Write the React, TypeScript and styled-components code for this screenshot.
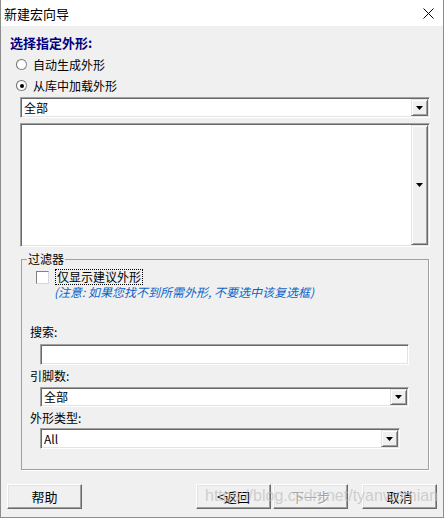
import styled, { createGlobalStyle } from 'styled-components';

const GlobalStyle = createGlobalStyle`
  body {
    margin: 0;
    font-family: "Noto Sans CJK SC", "Liberation Sans", sans-serif;
    font-size: 12px;
    color: #000;
  }
`;

const Window = styled.div`
  position: relative;
  width: 444px;
  height: 518px;
  box-sizing: border-box;
  background: #f0f0f0;
  border: 1px solid #8c8c8c;
  border-top: none;
  display: flex;
  flex-direction: column;
  overflow: hidden;
`;

const TitleBar = styled.div`
  height: 26px;
  background: #fff;
  display: flex;
  align-items: center;
  justify-content: space-between;
  padding: 0 9px 0 3px;
  font-size: 13px;

  svg {
    display: block;
  }
`;

const Content = styled.div`
  display: flex;
  flex-direction: column;
  align-items: flex-start;
  padding-left: 9px;
`;

const Heading = styled.div`
  margin-top: 9px;
  font-size: 13px;
  line-height: 16px;
  font-weight: bold;
  color: #000080;
`;

const RadioRow = styled.label`
  display: flex;
  align-items: center;
  height: 21px;
  margin-left: 6px;
  gap: 6px;
  line-height: 16px;

  &:first-of-type {
    margin-top: 3px;
  }
`;

const RadioDot = styled.span<{ $checked?: boolean }>`
  width: 11px;
  height: 11px;
  box-sizing: border-box;
  border-radius: 50%;
  border: 1px solid #8a8a8a;
  border-top-color: #6f6f6f;
  border-left-color: #6f6f6f;
  background: #fff;
  display: flex;
  align-items: center;
  justify-content: center;

  &::after {
    content: '';
    width: 4px;
    height: 4px;
    border-radius: 50%;
    background: ${p => (p.$checked ? '#000' : 'transparent')};
  }
`;

const Sunken = styled.div<{ $w: number; $h: number; $top?: number; $left?: number }>`
  width: ${p => p.$w}px;
  height: ${p => p.$h}px;
  margin-top: ${p => p.$top ?? 0}px;
  margin-left: ${p => p.$left ?? 0}px;
  box-sizing: border-box;
  background: #fff;
  border: 1px solid;
  border-color: #a0a0a0 #fff #fff #a0a0a0;
  box-shadow: inset 1px 1px 0 #696969, inset -1px -1px 0 #e3e3e3;
  display: flex;
  align-items: stretch;
  padding: 1px;
`;

const Value = styled.div`
  flex: 1;
  display: flex;
  align-items: center;
  padding-left: 2px;
  font-size: 12px;
  line-height: 14px;
`;

const RaisedButton = styled.div`
  width: 17px;
  box-sizing: border-box;
  background: #f0f0f0;
  border: 1px solid;
  border-color: #e3e3e3 #696969 #696969 #e3e3e3;
  box-shadow: inset 1px 1px 0 #fff, inset -1px -1px 0 #a0a0a0;
  display: flex;
  align-items: center;
  justify-content: center;
`;

const Group = styled.fieldset`
  margin: 4px 0 0 11px;
  width: 408px;
  box-sizing: border-box;
  padding: 0 0 20px 0;
  border: 1px solid #a0a0a0;
  box-shadow: 1px 1px 0 #fff;
  display: flex;
  flex-direction: column;
  align-items: flex-start;

  legend {
    margin-left: 5px;
    padding: 0 1px;
    line-height: 16px;
  }
`;

const CheckRow = styled.div`
  display: flex;
  align-items: center;
  gap: 6px;
  margin: 2px 0 0 14px;
  height: 16px;
`;

const CheckBox = styled.span`
  width: 13px;
  height: 13px;
  box-sizing: border-box;
  background: #fff;
  border: 1px solid;
  border-color: #808080 #d8d8d8 #d8d8d8 #808080;
`;

const FocusLabel = styled.span`
  border: 1px dotted #000;
  padding: 0 1px;
  line-height: 14px;
`;

const Note = styled.div`
  margin-left: 32px;
  font-size: 12px;
  line-height: 14px;
  font-style: italic;
  color: #0a64c8;
`;

const FieldLabel = styled.div<{ $top: number }>`
  margin: ${p => p.$top}px 0 0 8px;
  line-height: 16px;
`;

const Footer = styled.div`
  display: flex;
  align-items: center;
  margin-top: 14px;
  padding: 0 6px;
  gap: 2px;
`;

const Spacer = styled.div`
  flex: 1;
`;

const DialogButton = styled.button<{ $gapLeft?: number }>`
  width: 75px;
  height: 25px;
  margin-left: ${p => p.$gapLeft ?? 0}px;
  box-sizing: border-box;
  background: #f0f0f0;
  border: 1px solid;
  border-color: #fff #696969 #696969 #fff;
  box-shadow: inset -1px -1px 0 #a0a0a0, inset 1px 1px 0 #e3e3e3;
  font-family: "Noto Sans CJK SC", "Liberation Sans", sans-serif;
  font-size: 13px;
  color: #000;
  padding: 0;

  &:disabled {
    color: #a0a0a0;
    text-shadow: 1px 1px 0 #fff;
  }
`;

const Watermark = styled.div`
  position: absolute;
  left: 204px;
  top: 486px;
  font-family: "Liberation Sans", sans-serif;
  font-size: 16px;
  line-height: 20px;
  color: rgba(190, 190, 190, 0.7);
  pointer-events: none;
  white-space: nowrap;
`;

const Arrow = () => (
  <svg width="7" height="4" viewBox="0 0 7 4">
    <polygon points="0,0 7,0 3.5,4" fill="#000" />
  </svg>
);

const Combo = ({ value, w, h, top, left }: { value: string; w: number; h: number; top?: number; left?: number }) => (
  <Sunken $w={w} $h={h} $top={top} $left={left}>
    <Value>{value}</Value>
    <RaisedButton>
      <Arrow />
    </RaisedButton>
  </Sunken>
);

const App = () => {
  return (
    <>
      <GlobalStyle />
      <Window>
        <TitleBar>
          <span>新建宏向导</span>
          <svg width="11" height="11" viewBox="0 0 11 11">
            <path d="M0.5 0.5 L10.5 10.5 M10.5 0.5 L0.5 10.5" stroke="#000" strokeWidth="1" />
          </svg>
        </TitleBar>
        <Content>
          <Heading>选择指定外形:</Heading>
          <RadioRow>
            <RadioDot />
            自动生成外形
          </RadioRow>
          <RadioRow>
            <RadioDot $checked />
            从库中加载外形
          </RadioRow>
          <Combo value="全部" w={410} h={21} top={1} left={10} />
          <Sunken $w={410} $h={124} $top={5} $left={10}>
            <Value />
            <RaisedButton>
              <Arrow />
            </RaisedButton>
          </Sunken>
          <Group>
            <legend>过滤器</legend>
            <CheckRow>
              <CheckBox />
              <FocusLabel>仅显示建议外形</FocusLabel>
            </CheckRow>
            <Note>(注意: 如果您找不到所需外形, 不要选中该复选框)</Note>
            <FieldLabel $top={25}>搜索:</FieldLabel>
            <Sunken $w={369} $h={21} $top={4} $left={18} />
            <FieldLabel $top={3}>引脚数:</FieldLabel>
            <Combo value="全部" w={369} h={20} top={3} left={18} />
            <FieldLabel $top={3}>外形类型:</FieldLabel>
            <Combo value="All" w={360} h={21} top={2} left={18} />
          </Group>
        </Content>
        <Footer>
          <DialogButton>帮助</DialogButton>
          <Spacer />
          <DialogButton>&lt;返回</DialogButton>
          <DialogButton disabled>下一步</DialogButton>
          <DialogButton $gapLeft={12}>取消</DialogButton>
        </Footer>
        <Watermark>https://blog.csdn.net/tyanwomian</Watermark>
      </Window>
    </>
  );
};

export default App;
